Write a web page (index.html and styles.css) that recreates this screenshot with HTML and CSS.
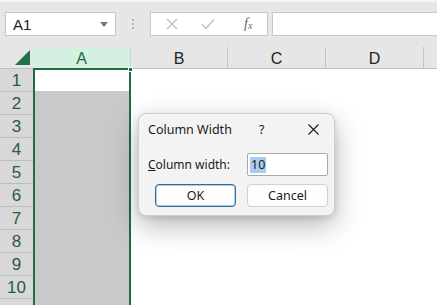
FILE: index.html
```html
<!DOCTYPE html>
<html>
<head>
<meta charset="utf-8">
<link rel="stylesheet" href="styles.css">
</head>
<body>
<div class="app">
  <div class="toolbar">
    <div class="namebox">
      <span class="nb-text">A1</span>
      <svg class="caret" width="8" height="5" viewBox="0 0 8 5"><path d="M0 0h8L4 5z" fill="#777"/></svg>
    </div>
    <div class="dots"><i></i><i></i><i></i></div>
    <div class="fxbox">
      <svg class="ic" width="12" height="12" viewBox="0 0 12 12"><path d="M1 1l10 10M11 1L1 11" stroke="#bdbdbd" stroke-width="1.3" fill="none"/></svg>
      <svg class="ic" width="14" height="12" viewBox="0 0 14 12"><path d="M1 6.5l4 4L13 1.5" stroke="#bdbdbd" stroke-width="1.3" fill="none"/></svg>
      <span class="fx">f<sub>x</sub></span>
    </div>
    <div class="formula"></div>
  </div>
  <div class="sheet">
    <div class="colheads">
      <div class="corner"><svg width="15" height="15" viewBox="0 0 15 15"><path d="M15 0V15H0z" fill="#217346"/></svg></div>
      <div class="ch sel">A</div>
      <div class="ch w97">B</div>
      <div class="ch">C</div>
      <div class="ch">D</div>
      <div class="ch last"></div>
    </div>
    <div class="body">
      <div class="rowheads">
        <div class="rh">1</div><div class="rh">2</div><div class="rh">3</div><div class="rh">4</div><div class="rh">5</div>
        <div class="rh">6</div><div class="rh">7</div><div class="rh">8</div><div class="rh">9</div><div class="rh">10</div>
        <div class="rh"></div>
      </div>
      <div class="colA"><div class="a1"></div><span class="handle"></span></div>
      <div class="rest"></div>
    </div>
  </div>

  <div class="dialog">
    <div class="dtitle">
      <span class="ttext">Column Width</span>
      <span class="help">?</span>
      <svg class="close" width="11" height="11" viewBox="0 0 11 11"><path d="M0.5 0.5l10 10M10.5 0.5l-10 10" stroke="#1a1a1a" stroke-width="1.1" fill="none"/></svg>
    </div>
    <div class="drow">
      <span class="label"><u>C</u>olumn width:</span>
      <div class="input"><span class="selected">10</span></div>
    </div>
    <div class="dbuttons">
      <div class="btn default">OK</div>
      <div class="btn">Cancel</div>
    </div>
  </div>
</div>
</body>
</html>
```

FILE: styles.css
```css
* { box-sizing: border-box; }
html, body { margin: 0; padding: 0; }
body { width: 437px; height: 305px; overflow: hidden; background: #fff; font-family: "Liberation Sans", Arial, sans-serif; }
.app { position: relative; width: 437px; height: 305px; overflow: hidden; }

.toolbar {
  height: 47px;
  background: #e6e6e6;
  border-top: 2px solid #f4f4f4;
  display: flex;
  align-items: flex-start;
  padding-top: 10px;
  padding-left: 5px;
}
.namebox {
  width: 111px; height: 24px;
  background: #fff;
  border: 1px solid #c8c8c8;
  display: flex; align-items: center; justify-content: space-between;
  padding: 0 7px 0 7px;
}
.nb-text { font-size: 15px; color: #222; }
.caret { margin-top: 1px; }
.dots { width: 34px; height: 24px; display: flex; flex-direction: column; align-items: center; justify-content: center; gap: 2px; }
.dots i { display: block; width: 2px; height: 2px; background: #a8a8a8; border-radius: 1px; }
.fxbox {
  width: 118px; height: 24px;
  background: #fff;
  border: 1px solid #c8c8c8;
  display: flex; align-items: center;
  padding-left: 15px;
  gap: 24px;
}
.fxbox .ic:nth-child(2) { margin-left: -1px; }
.fx { font-family: "Liberation Serif", serif; font-style: italic; font-size: 14px; color: #666; margin-left: 5px; line-height: 1; }
.fx sub { font-size: 10px; vertical-align: -1px; }
.formula { flex: 1; height: 24px; margin-left: 4px; background: #fff; border: 1px solid #c8c8c8; border-right: none; }

.sheet { display: flex; flex-direction: column; }
.colheads { display: flex; height: 22px; background: #e6e6e6; border-bottom: 1px solid #bdbdbd; }
.corner { width: 33px; display: flex; align-items: flex-end; justify-content: flex-end; padding: 0 3px 3px 0; }
.ch {
  width: 98px;
  border-right: 1px solid #c4c4c4;
  font-size: 16px; color: #222;
  display: flex; align-items: center; justify-content: center;
  padding-top: 3px;
}
.ch.w97 { width: 97px; }
.ch.sel { background: #d3f0e0; color: #1e6b41; border-right: 1px solid #c4d8cc; }
.ch.last { flex: 1; border-right: none; }

.body { display: flex; height: 236px; }
.rowheads { width: 33px; display: flex; flex-direction: column; background: #d8d8d8; }
.rh {
  height: 23px; flex: none;
  border-bottom: 1px solid #bcbcbc;
  font-size: 17px; color: #2a5a40;
  display: flex; align-items: center; justify-content: center;
  padding-top: 2px;
}
.colA {
  position: relative;
  width: 98px;
  margin-top: -1px;
  border: 2px solid #1f6b42;
  border-bottom: none;
  background: #c9c9c9;
}
.a1 { height: 21px; background: #fff; }
.handle { position: absolute; right: -4px; top: -3px; width: 5px; height: 5px; background: #1f6b42; border: 1px solid #fff; }
.rest { flex: 1; background: #fff; }

.dialog {
  position: absolute;
  left: 138px; top: 113px;
  width: 197px; height: 103px;
  background: #f3f3f3;
  border: 1px solid #cfcfcf;
  border-radius: 8px;
  box-shadow: 0 10px 28px rgba(0,0,0,0.28), 0 2px 6px rgba(0,0,0,0.12);
  font-family: "Noto Sans", "Open Sans", sans-serif;
  font-size: 12.5px;
  color: #1a1a1a;
}
.dtitle { height: 31px; display: flex; align-items: center; padding-left: 9px; }
.ttext { width: 111px; }
.help { width: 49px; }
.close { margin-top: 0; }
.drow { display: flex; align-items: center; margin-top: 8px; padding-left: 9px; }
.label { width: 99px; font-size: 12px; }
.input {
  width: 81px; height: 23px;
  background: #fff;
  border: 1px solid #a9a9a9;
  border-radius: 2px;
  display: flex; align-items: center;
  padding-left: 2px;
}
.selected { background: #a9cdf0; line-height: 16px; padding: 0 1px; }
.dbuttons { display: flex; gap: 11px; margin-top: 8px; padding-left: 16px; }
.btn {
  width: 81px; height: 23px;
  background: #fdfdfd;
  border: 1px solid #d0d0d0;
  border-radius: 4px;
  display: flex; align-items: center; justify-content: center;
}
.btn.default { border: 1px solid #2f6f9f; box-shadow: inset 0 0 0 0.5px #6d98be; }
```
